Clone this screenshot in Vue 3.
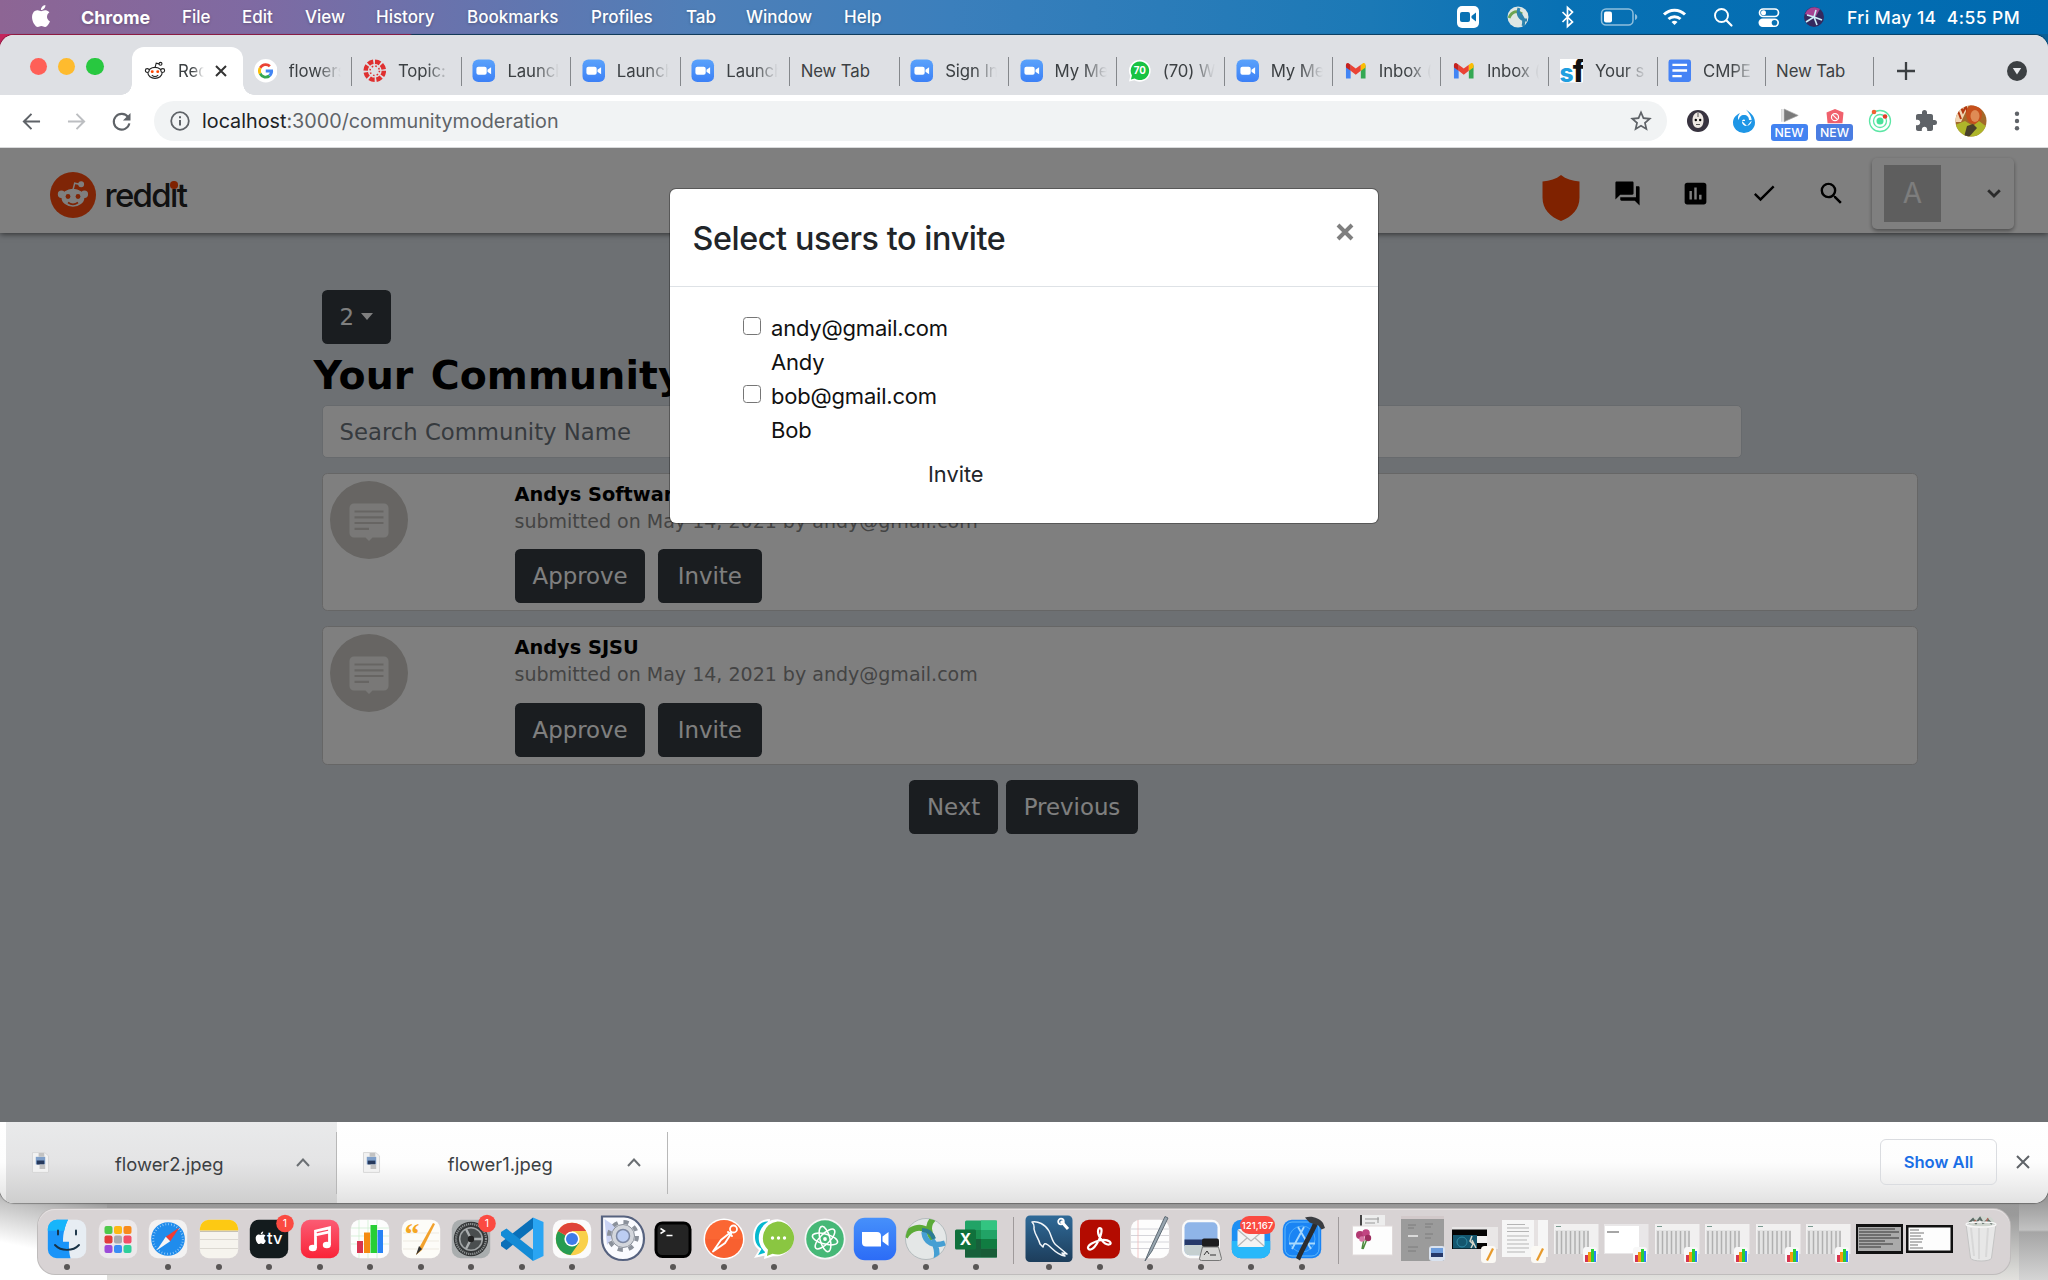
<script setup>
const menus = [
  ['Chrome', 101], ['File', 60], ['Edit', 63], ['View', 71], ['History', 91],
  ['Bookmarks', 124], ['Profiles', 95], ['Tab', 60], ['Window', 98], ['Help', 60],
]

const zoomFav = '<defs><linearGradient id="zf" x1="0" y1="0" x2="0" y2="1"><stop offset="0" stop-color="#5aa2fb"/><stop offset="1" stop-color="#3c80f6"/></linearGradient></defs><rect x=".5" y=".5" width="23" height="23" rx="6" fill="url(#zf)"/><rect x="4.500" y="8" width="10.500" height="8" rx="2" fill="#fff"/><path d="M15.800 11 19.500 8.300v7.400L15.800 13z" fill="#fff"/>'
const gmailFav = '<path d="M2 6v14h4.800V12z" fill="#4285f4"/><path d="M17.200 12v8H22V6z" fill="#34a853"/><path d="M6.800 5.800 12 9.800l5.200-4v6.200L12 16l-5.200-4z" fill="#ea4335"/><path d="M17.200 5.800 19 4.500c1.400-1 3-.1 3 1.500v2.600L17.200 12z" fill="#fbbc04"/><path d="M6.800 5.800 5 4.500C3.600 3.500 2 4.400 2 6v2.600L6.800 12z" fill="#c5221f"/>'

const tabs = [
  { icon: '<circle cx="12" cy="12" r="12" fill="#fff"/><path d="M12 4.300a7.700 7.700 0 0 1 5.200 2l-2 2.100A4.800 4.800 0 0 0 7.500 10L5.200 8.200A7.700 7.700 0 0 1 12 4.300z" fill="#ea4335"/><path d="M5.200 8.200 7.500 10a5 5 0 0 0 0 4.100l-2.400 1.800a7.700 7.700 0 0 1 .1-7.700z" fill="#fbbc05"/><path d="M5.100 15.900 7.500 14.100a4.800 4.800 0 0 0 7.100 2.100l2.400 1.900a7.700 7.700 0 0 1-11.900-2.200z" fill="#34a853"/><path d="M12 10.700h7.400c.5 3-.5 5.700-2.400 7.400l-2.400-1.900a3.400 3.400 0 0 0 1.500-2.400H12z" fill="#4285f4"/>', text: 'flowers' },
  { icon: '<g fill="none" stroke="#df3030"><circle cx="12" cy="12" r="9.300" stroke-width="4.600" stroke-dasharray="5.500 1.800"/><circle cx="12" cy="12" r="4.800" stroke-width="1.600" stroke-dasharray="1.600 2.170"/></g>', text: 'Topic: A' },
  { icon: zoomFav, text: 'Launch' },
  { icon: zoomFav, text: 'Launch' },
  { icon: zoomFav, text: 'Launch' },
  { text: 'New Tab' },
  { icon: zoomFav, text: 'Sign In' },
  { icon: zoomFav, text: 'My Mee' },
  { icon: '<path d="M12 .8a11.200 11.200 0 1 1-5.500 21L1 23l1.300-5.600A11.200 11.200 0 0 1 12 .8z" fill="#fff"/><path d="M12 2.500a9.500 9.500 0 1 1-5.200 17.400L3 21l1-4.200A9.500 9.500 0 0 1 12 2.500z" fill="#18c343"/><text x="12" y="15.800" text-anchor="middle" font-family="Inter,sans-serif" font-weight="700" font-size="10" fill="#fff">70</text>', text: '(70) Wh' },
  { icon: zoomFav, text: 'My Mee' },
  { icon: gmailFav, text: 'Inbox (' },
  { icon: gmailFav, text: 'Inbox (' },
  { icon: '<rect width="24" height="24" fill="#fff"/><text x="-.5" y="23.500" font-family="Inter,sans-serif" font-weight="800" font-size="25" fill="#1f9fe0">s</text><text x="13" y="23.500" font-family="Inter,sans-serif" font-weight="800" font-size="31" fill="#111">f</text>', text: 'Your s' },
  { icon: '<rect x=".5" y=".5" width="23" height="23" rx="2.500" fill="#4683f5"/><path d="M4.500 6h15M4.500 11.700h15M4.500 17.500h9.500" stroke="#fff" stroke-width="2.500"/>', text: 'CMPE' },
  { text: 'New Tab' },
]

const snoo = '<ellipse cx="12" cy="14" rx="7.800" ry="6"/><circle cx="3.600" cy="11.500" r="2.100"/><circle cx="20.400" cy="11.500" r="2.100"/><circle cx="18" cy="4.200" r="1.600"/><path d="M12 8.500 13.300 3.400 16.500 4.200" fill="none"/>'

const rows = [
  { title: 'Andys Software', by: 'submitted on May 14, 2021 by andy@gmail.com' },
  { title: 'Andys SJSU', by: 'submitted on May 14, 2021 by andy@gmail.com' },
]
const users = [
  { mail: 'andy@gmail.com', name: 'Andy' },
  { mail: 'bob@gmail.com', name: 'Bob' },
]

const tile = (fill, extra = '') => `<rect x="4.800" y="4.800" width="38.400" height="38.400" rx="9" fill="${fill}" ${extra}/>`
const badge = '<circle cx="40" cy="8.500" r="8.800" fill="#fb4a41"/><text x="40" y="12.300" text-anchor="middle" font-family="Inter,sans-serif" font-size="10.500" fill="#fff">1</text>'
const pen = '<path d="M36 8 22 33l-3 7 6-5L38 9z" fill="#f2a12c"/><path d="M22 31 19 40l6-6z" fill="#333"/>'

const dockApps = [
  { on: 1, svg: `${tile('#e7edf3')}<path d="M13.800 4.800H25c-3 6-5 13-5 22h6c-.3 6 0 11 1.500 16.400H13.800a9 9 0 0 1-9-9V13.800a9 9 0 0 1 9-9z" fill="#1a94f8"/><path d="M13.800 4.800H25c-2 4-3 7-3.700 11H4.800v-2a9 9 0 0 1 9-9z" fill="#17b5fb"/><path d="M15 15.500v4M33 15.500v4M12 30c6 6.500 18 6.500 24 0" fill="none" stroke="#173044" stroke-width="1.900" stroke-linecap="round"/>` },
  { svg: `${tile('#ece9eb')}<g><rect x="10.500" y="11" width="8" height="8" rx="2" fill="#4fc84b"/><rect x="20" y="11" width="8" height="8" rx="2" fill="#fdb813"/><rect x="29.500" y="11" width="8" height="8" rx="2" fill="#f78a1c"/><rect x="10.500" y="20.500" width="8" height="8" rx="2" fill="#e23b3b"/><rect x="20" y="20.500" width="8" height="8" rx="2" fill="#a9a9ae"/><rect x="29.500" y="20.500" width="8" height="8" rx="2" fill="#f14e68"/><rect x="10.500" y="30" width="8" height="8" rx="2" fill="#9c4bd8"/><rect x="20" y="30" width="8" height="8" rx="2" fill="#3a8df5"/><rect x="29.500" y="30" width="8" height="8" rx="2" fill="#2fcf9b"/></g>` },
  { on: 1, svg: `${tile('#f3f2f2')}<circle cx="24" cy="24" r="16.800" fill="#1f8cec"/><circle cx="24" cy="24" r="14.800" fill="none" stroke="#aad6fa" stroke-width="2" stroke-dasharray=".7 2.200"/><path d="M35.500 12.500 21.800 21.800 26.200 26.200z" fill="#f23b33"/><path d="M12.500 35.500 21.800 21.800 26.200 26.200z" fill="#f5f5f5"/>` },
  { on: 1, svg: `${tile('#f6f4ee')}<path d="M4.800 15.500v-1.700a9 9 0 0 1 9-9h20.400a9 9 0 0 1 9 9v1.700z" fill="#fdc913"/><path d="M5 16.300h38" stroke="#b9b4a6" stroke-width="1"/><path d="M5 24.500h38M5 33.500h38" stroke="#d5d2ca" stroke-width=".8"/>` },
  { on: 1, svg: `${tile('#131b1d')}<g transform="translate(9.500 16.500) scale(.52)"><path fill="#fff" d="M12.152 6.896c-.948 0-2.415-1.078-3.960-1.040-2.040.027-3.910 1.183-4.961 3.014-2.117 3.675-.546 9.103 1.519 12.090 1.013 1.454 2.208 3.090 3.792 3.039 1.520-.065 2.090-.987 3.935-.987 1.831 0 2.350.987 3.960.948 1.637-.026 2.676-1.480 3.676-2.948 1.156-1.688 1.636-3.325 1.662-3.415-.039-.013-3.182-1.221-3.220-4.857-.026-3.040 2.480-4.494 2.597-4.559-1.429-2.090-3.623-2.324-4.390-2.376-2-.156-3.675 1.090-4.610 1.090zM15.530 3.830c.843-1.012 1.400-2.427 1.245-3.830-1.207.052-2.662.805-3.532 1.818-.780.896-1.454 2.338-1.273 3.714 1.338.104 2.715-.688 3.559-1.701"/></g><text x="22" y="29" font-family="Inter,sans-serif" font-size="16.500" font-weight="500" fill="#fff">tv</text>${badge}` },
  { on: 1, svg: `<defs><linearGradient id="mu" x1="0" y1="0" x2="0" y2="1"><stop offset="0" stop-color="#fb5c74"/><stop offset="1" stop-color="#fa2338"/></linearGradient></defs>${tile('url(#mu)')}<path d="M19.500 33V16l14-3.200V30M19.500 20l14-3.200" fill="none" stroke="#fff" stroke-width="2.800"/><ellipse cx="16.800" cy="33" rx="4" ry="3.200" fill="#fff"/><ellipse cx="30.800" cy="30" rx="4" ry="3.200" fill="#fff"/>` },
  { on: 1, svg: `${tile('#fdfdfd')}<path d="M5 13h38M5 21h38M5 29h38M13 5v38M22 5v38M31 5v38" stroke="#c9eccb" stroke-width=".7"/><path d="M11 26h6v12h-6z" fill="#d8344f"/><path d="M18 17.500h6V38h-6z" fill="#f58a12"/><path d="M24.500 10h6.500v28h-6.500z" fill="#28cf35"/><path d="M31.500 15H37v23h-5.500z" fill="#2782f5"/>` },
  { on: 1, svg: `${tile('#fdfcf8')}<path d="M6 18h36M6 26h36M6 34h36" stroke="#e6e3d8" stroke-width=".7"/><text x="7.500" y="29" font-family="Liberation Serif,serif" font-size="30" font-weight="700" fill="#f5a623">“</text>${pen}` },
  { on: 1, svg: `${tile('#a9adae')}<circle cx="24" cy="24" r="17.200" fill="#333637"/><circle cx="24" cy="24" r="15" fill="none" stroke="#8e9293" stroke-width="2.200" stroke-dasharray="1.200 .9"/><circle cx="24" cy="24" r="11.300" fill="#4a4e4f" stroke="#9fa3a4" stroke-width="1.600"/><path d="M24 24 19 14M24 24h11.300M24 24 19 34" stroke="#aaaeaf" stroke-width="2.400"/><circle cx="24" cy="24" r="3.200" fill="#222"/>${badge}` },
  { on: 1, svg: '<path d="M35 2.500 45.500 7v34L35 46z" fill="#2aa5f3"/><path d="M35 2.500v11L8.500 35 3 31v-3.500z" fill="#0a6fb8"/><path d="M35 46V34.500L8.500 13.500 3 17v3.500z" fill="#148bd6"/>' },
  { on: 1, svg: `${tile('#fbfbfb')}<circle cx="24" cy="24" r="16.200" fill="#f9d04a"/><path d="M24 24 10 15.900A16.200 16.200 0 0 0 22.500 40.100L31 28 24 24z" fill="#279c52"/><path d="M24 24 9.900 16a16.200 16.200 0 0 1 28.200 0H24z" fill="#df4439"/><circle cx="24" cy="24" r="7.600" fill="#fff"/><circle cx="24" cy="24" r="6" fill="#3f7ce9"/>` },
  { svg: '<path d="M3 1.500h22A20.500 22 0 0 1 45 23.500C45 36 36 45 24 45S3 36 3 23.500z" fill="#fafbff" stroke="#56627f" stroke-width="2.200"/><path d="M5.500 4 20 14 8 30z" fill="#c9d2f3"/><circle cx="24" cy="21" r="14" fill="none" stroke="#8b919b" stroke-width="4" stroke-dasharray="5.200 5.800"/><circle cx="24" cy="21" r="11.500" fill="#d3d6dc" stroke="#8b919b"/><circle cx="24" cy="21" r="6.500" fill="#bccdf2" stroke="#7c88a3" stroke-width="1.500"/>' },
  { on: 1, svg: '<rect x="5.500" y="6.500" width="37" height="36.500" rx="8" fill="#000"/><rect x="8.500" y="9.500" width="31" height="30.500" rx="4.500" fill="#242424"/><path d="M11.500 13.500 15.500 16l-4 2.500M17.500 20.500h6" fill="none" stroke="#fff" stroke-width="1.500"/>' },
  { on: 1, svg: '<circle cx="24" cy="24" r="20.500" fill="#fff"/><circle cx="24" cy="24" r="19" fill="#fb6633"/><path d="M24 43A19 19 0 0 1 5 24h38a19 19 0 0 1-19 19z" fill="#f4552b" opacity=".35"/><circle cx="33.500" cy="14" r="3.500" fill="none" stroke="#fff" stroke-width="1.800"/><path d="M31 17 21 25l-8 11.500M31.500 18 25 28l-12 8.500M28 17l4 4" fill="none" stroke="#fff" stroke-width="1.900" stroke-linecap="round"/>' },
  { on: 1, svg: '<path d="M20 4C9 4 3 12 3 22c0 6 2 10 6 13L4 43l14-3z" fill="#fff"/><path d="M18 6.500C10 6.500 5 13 5 22c0 5 2 9 6.500 12L8 40l9-3z" fill="#06b9cf"/><path d="M27.500 4.200A18.500 18.500 0 1 1 23 41.200L14 44l1-7A18.800 18.800 0 0 1 27.500 4.200z" fill="#fff"/><path d="M27.500 6.500a16.500 16.500 0 1 1-5 32.200L17 41l1-6.300A16.500 16.500 0 0 1 27.500 6.500z" fill="#8ac641"/><g fill="#fff"><circle cx="22.500" cy="23" r="1.700"/><circle cx="28.500" cy="23" r="1.700"/><circle cx="34.500" cy="23" r="1.700"/></g>' },
  { svg: '<circle cx="24" cy="24" r="20.500" fill="#f6f6f6"/><circle cx="24" cy="24" r="18.800" fill="#46b877"/><g fill="none" stroke="#fff" stroke-width="1.500"><ellipse cx="24" cy="24" rx="13" ry="5" transform="rotate(15 24 24)"/><ellipse cx="24" cy="24" rx="13" ry="5" transform="rotate(75 24 24)"/><ellipse cx="24" cy="24" rx="13" ry="5" transform="rotate(135 24 24)"/></g><circle cx="24" cy="24" r="1.900" fill="#fff"/>' },
  { on: 1, svg: '<defs><linearGradient id="zz" x1="0" y1="0" x2="0" y2="1"><stop offset="0" stop-color="#4690fb"/><stop offset="1" stop-color="#2c6cf6"/></linearGradient></defs><rect x="2.800" y="2.800" width="42.400" height="42.400" rx="11" fill="url(#zz)"/><path d="M11 17h15a4 4 0 0 1 4 4v10.500H15a4 4 0 0 1-4-4z" fill="#fff"/><path d="M31.500 21.500 37.500 17v14l-6-4.500z" fill="#fff"/>' },
  { on: 1, svg: '<defs><clipPath id="cs"><circle cx="24" cy="24" r="20.500"/></clipPath></defs><circle cx="24" cy="24" r="20.500" fill="#e4e7e7" stroke="#a8b3b5" stroke-width=".8"/><g clip-path="url(#cs)"><path d="M3 22c5-9 15-12 23-6M33 2c-7 6-8 14-2 22" fill="none" stroke="#5bab38" stroke-width="6"/><path d="M22 17c1 11 10 15 21 11M34 45c2-8 0-15-4-20" fill="none" stroke="#459fd3" stroke-width="5.500"/><path d="M20 15c6 0 10 3 12 9" fill="none" stroke="#2c7c95" stroke-width="4"/></g>' },
  { on: 1, svg: '<rect x="13" y="5.500" width="32" height="37" rx="1.500" fill="#21a366"/><path d="M29 5.500h16v9.500H29z" fill="#33c481"/><path d="M13 15h16v9H13z" fill="#1a8f51"/><path d="M29 24h16v9.500H29z" fill="#107c41"/><path d="M13 24h16v18.500H13z" fill="#17603a"/><path d="M29 33.500h16v9H29z" fill="#185c37"/><rect x="3" y="14.500" width="21" height="20" rx="1.500" fill="#10713c"/><text x="13.500" y="30.300" text-anchor="middle" font-family="Inter,sans-serif" font-weight="700" font-size="15.500" fill="#fff">X</text>' },
]

const dockRecent = [
  { on: 1, svg: '<defs><linearGradient id="my" x1="0" y1="0" x2="0" y2="1"><stop offset="0" stop-color="#2f6a98"/><stop offset="1" stop-color="#1d3d5b"/></linearGradient></defs><rect x=".5" y=".5" width="47" height="46.500" rx="4.500" fill="url(#my)"/><path d="M7 7c6-1 13 2 17 9 3 6 3 11 7 14l11 9-5-1 3 3c-8-1-12-7-17-11-3-2-4-2-5 2l-3-3c-1-5-5-9-6-15 0-3 1-4-2-7z" fill="none" stroke="#f2f6fa" stroke-width="1.500" stroke-linejoin="round"/><path d="M36 6 43 14" stroke="#fff" stroke-width="3"/><circle cx="36" cy="6.500" r="2.800" fill="none" stroke="#fff" stroke-width="1.800"/>' },
  { on: 1, svg: '<rect x="4" y="4.800" width="40" height="38.800" rx="9" fill="#b30b00"/><path d="M12.500 34c-3-3 6-8 13-9 8-1 11.500 4 7.500 4.500-5 .5-11-8-11-13 0-5 4-4 3.500 0-.5 6-8 21-13 17.500z" fill="none" stroke="#fff" stroke-width="2.200"/>' },
  { on: 1, svg: `${tile('#fdfdfd')}<path d="M5 14h38M5 20.500h38M5 27h38M5 33.500h38" stroke="#d5d5da" stroke-width="1"/><path d="M12 5v38" stroke="#f0b9b9" stroke-width=".8"/><path d="M39 1.500 24 34l-5 12 7-10L42 3z" fill="#98a6b0" stroke="#5f6b75" stroke-width="1"/>` },
  { on: 1, svg: '<rect x="5" y="4.800" width="38" height="38.400" rx="8" fill="#fafafa"/><rect x="7.500" y="7.300" width="33" height="33" rx="5" fill="#8fb5e8"/><path d="M7.500 24.500h33V31h-33z" fill="#26396a"/><path d="M7.500 30h33v5.300a5 5 0 0 1-5 5h-23a5 5 0 0 1-5-5z" fill="#c5cfd0"/><rect x="25" y="23.500" width="17" height="8.500" rx="2" fill="#1c1c1e"/><path d="M25.500 32h16l3 11.500a2 2 0 0 1-2 2H24.500a2 2 0 0 1-2-2z" fill="#d6d6d4" stroke="#777"/><path d="m27 40 3-4 2 3M33 40h6" stroke="#333" fill="none"/>' },
  { on: 1, svg: `${tile('#1d8ff3')}<path d="M4.800 26h38.400v8.200a9 9 0 0 1-9 9H13.800a9 9 0 0 1-9-9z" fill="#28b8fa"/><rect x="10.500" y="14" width="27" height="18" rx="2" fill="#f3f3f3"/><path d="m11 15 13 11 13-11M11 31l9-8M37 31l-9-8" fill="none" stroke="#b7b7b7" stroke-width="1.200"/><rect x="13" y="1" width="35" height="18" rx="9" fill="#fb4a41"/><text x="30.500" y="13.500" text-anchor="middle" font-family="Inter,sans-serif" font-size="9.600" font-weight="500" fill="#fff">121,167</text>` },
  { on: 1, svg: `${tile('#1a84f4')}<rect x="7" y="7" width="34" height="34" rx="7" fill="none" stroke="#62bafb" stroke-width="1"/><circle cx="24" cy="24" r="13" fill="none" stroke="#57b2fa" stroke-width=".8"/><path d="M26 12 14 34M20 12l13 22M11 28.500h26" stroke="#a8d8fd" stroke-width="1.800" fill="none"/><path d="M35 8c-3 8-14 27-17 35l4 2.500C26 36 36 18 40 9z" fill="#2b2d30"/><path d="M27 2.500c7-2 14 .5 18 5.500l2 5-3.500 1.500-3-4-9-3z" fill="#3a3c40"/>` },
]

const miniBars = '<rect x="30" y="32" width="14" height="16" rx="3" fill="#f8f8f8"/><path d="M32 40h3v7h-3z" fill="#d8344f"/><path d="M35 37h3v10h-3z" fill="#f59a12"/><path d="M38 34h3v13h-3z" fill="#28cf35"/><path d="M41 36h2v11h-2z" fill="#2782f5"/>'
const miniPen = '<rect x="29" y="31" width="15" height="17" rx="3.500" fill="#fbf9f4"/><path d="m40 33-6 12 2 1 6-12z" fill="#e79a2c"/>'
const sheet = `<rect x="1" y="9" width="44.500" height="30" fill="#f1f0f0"/><path d="M2 15h34v24H2z" fill="#e4e4e4"/><path d="M4 16v23M8.500 16v23M13 16v23M17.500 16v23M22 16v23M26.500 16v23M31 16v23M35 16v18" stroke="#b0b0b0" stroke-width="1.500"/><path d="M3 11.500h5" stroke="#7a9a90"/>${miniBars}`
const minis = [
  '<path d="M9 0h25v11H9z" fill="#ededed"/><path d="M9 0h2v11H9z" fill="#444"/><path d="M14 4h14M14 8h10M27 2v6" stroke="#999"/><rect x="1.500" y="11" width="40" height="29" fill="#fdfdfd" stroke="#e0dada"/><path d="M13 24 11 34M16 24l-4 10" stroke="#4c8a3c" stroke-width="1.500"/><circle cx="9" cy="20" r="4" fill="#b23a72"/><circle cx="15" cy="18" r="3.800" fill="#c14582"/><circle cx="17" cy="23" r="3.200" fill="#9d2c5f"/><circle cx="11" cy="24" r="2.800" fill="#d774a5"/>',
  '<rect x="0" y="1" width="43" height="45" fill="#9b9b9b"/><path d="M0 1h43v3H0z" fill="#d2c9ca"/><path d="M7 10h8M7 13h6M24 9h8M24 12h6M7 32h10M7 36h8M24 19h8M24 23h6" fill="none" stroke="#7c7c7c"/><path d="M7 21h10" stroke="#eee" stroke-width="1.500"/><rect x="28" y="31" width="16" height="15" rx="3" fill="#d9e2ef"/><path d="M30 33h12v5H30z" fill="#6d9ddd"/><path d="M30 38h12v4H30z" fill="#26396a"/>',
  '<rect x="0" y="12" width="46" height="22" fill="#e9e7e7"/><rect x="0" y="14.500" width="35" height="19.500" fill="#050505"/><rect x="1" y="20" width="24" height="13.500" fill="#14566e"/><circle cx="10" cy="27" r="5" fill="none" stroke="#2f8ba6"/><path d="M25 21h10v7H25z" fill="#f2f2f2"/><path d="m20 21-2 5 3 3-2 4M20 25l4 8" stroke="#d5d5c8" stroke-width="1.500" fill="none"/>' + miniPen,
  '<rect x="0" y="5" width="46" height="37" fill="#f6f6f6"/><path d="M5 9.500h18M5 13h22M5 16.500h22M5 21h22M5 25h20M5 29h22M5 33h22M5 37h18" stroke="#b5b5b5" stroke-width="1"/><path d="M34 5v37" stroke="#e6e2e2" stroke-width="4"/>' + miniPen,
  sheet,
  `<rect x="1" y="9" width="44.500" height="30" fill="#e9e7e8"/><path d="M2 11h34v27H2z" fill="#fff"/><path d="M4 17h12" stroke="#888" stroke-width="1.500"/>${miniBars}`,
  sheet, sheet, sheet, sheet,
  '<rect x="0" y="9" width="47" height="30" fill="#111"/><rect x="2" y="12" width="43" height="24" fill="#aaa"/><path d="M3 14h36M3 17h40M3 20h32M3 23h40M3 26h26M3 29h34M3 32h22" stroke="#333" stroke-width="1.200"/>',
  '<rect x="0" y="10" width="47" height="28" fill="#111"/><rect x="2.500" y="12.500" width="42" height="23" fill="#fdfdfd"/><path d="M4 15h9M4 18h14M4 21h11M4 24h13M4 27h12M4 30h8M4 33h13" stroke="#777" stroke-width="1.200"/>',
  '<path d="M9 9h30l-4.500 34c-.5 4-20 4-21 0z" fill="#e9e9e9" fill-opacity=".9" stroke="#c4c4c4"/><path d="M14 13l3 28M22 13v31M31 13l-2 29" stroke="#d8d8d8" stroke-width="2"/><path d="M10 8c4-7 9-4 12-6s6 1 9 0 6 3 7 7c-7 4-21 4-28-1z" fill="#cfd5cf"/><path d="m12 8 4-4 3 4 4-5 3 5 5-3 4 4" stroke="#5c6a65" stroke-width="2" fill="none"/><path d="m17 8 2-3M29 7l2-4" stroke="#b0695c" stroke-width="1.500"/><ellipse cx="24" cy="9.500" rx="15" ry="2.500" fill="none" stroke="#f7f7f7" stroke-width="1.300"/>',
]
</script>

<template>
  <div class="desktop">
    <div class="wallpaper"><i class="w1"></i><i class="w2"></i><i class="w3"></i></div>

    <header class="menubar">
      <svg class="apple" viewBox="0 0 24 24"><path fill="#fff" d="M12.152 6.896c-.948 0-2.415-1.078-3.960-1.040-2.040.027-3.910 1.183-4.961 3.014-2.117 3.675-.546 9.103 1.519 12.090 1.013 1.454 2.208 3.090 3.792 3.039 1.520-.065 2.090-.987 3.935-.987 1.831 0 2.350.987 3.960.948 1.637-.026 2.676-1.480 3.676-2.948 1.156-1.688 1.636-3.325 1.662-3.415-.039-.013-3.182-1.221-3.220-4.857-.026-3.040 2.480-4.494 2.597-4.559-1.429-2.090-3.623-2.324-4.390-2.376-2-.156-3.675 1.090-4.610 1.090zM15.530 3.830c.843-1.012 1.400-2.427 1.245-3.830-1.207.052-2.662.805-3.532 1.818-.780.896-1.454 2.338-1.273 3.714 1.338.104 2.715-.688 3.559-1.701" /></svg>
      <nav>
        <span v-for="(m, i) in menus" :key="m[0]" :class="{ app: i === 0 }" :style="{ width: m[1] + 'px' }">{{ m[0] }}</span>
      </nav>
      <div class="status">
        <svg width="50" height="34" viewBox="-25 -17 50 34"><rect x="-11" y="-11" width="22" height="22" rx="5" fill="#fff" /><rect x="-8" y="-5" width="10" height="10" rx="2" fill="#0871b3" /><path d="M3.500-1 8-4.500v9L3.500 1z" fill="#0871b3" /></svg>
        <svg width="50" height="34" viewBox="-25 -17 50 34"><circle r="10.500" fill="#dfe7e4" /><path d="M-9 1c3-7 8-8 13-4" stroke="#6da552" stroke-width="3" fill="none" /><path d="M1-9C-1-3 1 3 9 3M5 9C7 3 4-2 1-4" stroke="#2e84ae" stroke-width="3" fill="none" /></svg>
        <svg width="49" height="34" viewBox="-24.500 -17 49 34"><path d="M-5-5 5 5 0 9.500v-19L5-5-5 5" fill="none" stroke="#fff" stroke-width="1.700" /></svg>
        <svg width="54" height="34" viewBox="-27 -17 54 34"><rect x="-17.500" y="-8" width="31.500" height="16" rx="4.500" fill="none" stroke="#fff" stroke-opacity=".55" stroke-width="1.500" /><path d="M16-3c3 1 3 5 0 6z" fill="#fff" fill-opacity=".55" /><rect x="-15" y="-5.500" width="8" height="11" rx="2" fill="#fff" /></svg>
        <svg width="57" height="34" viewBox="-28.500 -17 57 34"><g fill="none" stroke="#fff" stroke-width="3"><path d="M-10.500-2.500a15 15 0 0 1 21 0M-6 2a9 9 0 0 1 12 0" /></g><path d="M-3 5a4.500 4.500 0 0 1 6 0L0 8z" fill="#fff" /></svg>
        <svg width="40" height="34" viewBox="-20 -17 40 34"><circle cx="-1.500" cy="-1.500" r="6.500" fill="none" stroke="#fff" stroke-width="1.900" /><path d="m3.500 3.500 5 5" stroke="#fff" stroke-width="2.200" stroke-linecap="round" /></svg>
        <svg width="51" height="34" viewBox="-25.500 -17 51 34"><rect x="-9" y="-8" width="19" height="7.500" rx="3.700" fill="none" stroke="#fff" stroke-width="1.700" /><circle cx="-5" cy="-4.200" r="2.500" fill="#fff" /><rect x="-10" y="1.500" width="20.500" height="8.500" rx="4.200" fill="#fff" /><circle cx="6" cy="5.700" r="2.800" fill="#0871b3" /></svg>
        <svg width="53" height="34" viewBox="-20 -17 53 34"><circle r="10" fill="#35295e" /><path d="M-9-3A10 10 0 0 1 6-8L1 1z" fill="#c04aa0" opacity=".8" /><path d="M-8 5 0 0l2-7M0 0l8 3M0 0l3 8M-7-2l7 2" stroke="#cdeef7" stroke-width="1.600" fill="none" /></svg>
        <span class="clock">Fri May 14&nbsp; 4:55 PM</span>
      </div>
    </header>

    <section class="window">
      <div class="tabstrip">
        <div class="lights"><i class="r"></i><i class="y"></i><i class="g"></i></div>
        <div class="tab active">
          <svg class="fav" viewBox="0 0 24 24"><g fill="#fff" stroke="#222" stroke-width="1.200" v-html="snoo"></g><circle cx="9" cy="12.700" r="1.600" fill="#ff4500" /><circle cx="15" cy="12.700" r="1.600" fill="#ff4500" /><path d="M8.500 16.500c2 1.800 5 1.800 7 0" fill="none" stroke="#222" stroke-width="1.100" /></svg>
          <span class="label">Reddit</span>
          <svg class="x" viewBox="0 0 12 12"><path d="m1 1 10 10M11 1 1 11" stroke="#333" stroke-width="2" /></svg>
        </div>
        <div v-for="(t, i) in tabs" :key="i" class="tab" :class="i < 7 ? 'wide' : 'slim'">
          <svg v-if="t.icon" class="fav" viewBox="0 0 24 24" v-html="t.icon"></svg>
          <span class="label" :class="{ plain: !t.icon }">{{ t.text }}</span>
        </div>
        <svg class="plus" viewBox="0 0 18 18"><path d="M9 0v18M0 9h18" stroke="#3c4043" stroke-width="2.300" /></svg>
        <svg class="down" viewBox="0 0 20 20"><circle cx="10" cy="10" r="10" fill="#3c4043" /><path d="M5.800 7h8.400L10 13.500z" fill="#e8eaed" /></svg>
      </div>

      <div class="toolbar">
        <svg class="nav" viewBox="0 0 20 20"><path d="M19 10H2M10 2l-8 8 8 8" fill="none" stroke="#5f6368" stroke-width="2.100" /></svg>
        <svg class="nav" viewBox="0 0 20 20"><path d="M1 10h17M10 2l8 8-8 8" fill="none" stroke="#bcbec1" stroke-width="2.100" /></svg>
        <svg class="nav" viewBox="0 0 20 20"><path d="M17 5.500a8.300 8.300 0 1 0 1.300 6.500" fill="none" stroke="#5f6368" stroke-width="2.200" /><path d="M19.500 1v8h-8z" fill="#5f6368" /></svg>
        <div class="url">
          <svg viewBox="0 0 20 20" width="20" height="20"><circle cx="10" cy="10" r="8.800" fill="none" stroke="#5f6368" stroke-width="1.800" /><path d="M10 9v5.500M10 5.200v2" stroke="#5f6368" stroke-width="2" /></svg>
          <span><b>localhost</b>:3000/communitymoderation</span>
          <svg class="star" viewBox="0 0 24 24" width="26" height="26"><path fill="#5f6368" d="M22 9.240l-7.190-.620L12 2 9.190 8.630 2 9.240l5.460 4.730L5.820 21 12 17.270 18.180 21l-1.630-7.030L22 9.240zM12 15.400l-3.760 2.270 1-4.280-3.320-2.880 4.380-.380L12 6.100l1.710 4.040 4.380.380-3.320 2.880 1 4.280L12 15.400z" /></svg>
        </div>
        <div class="exts">
          <svg viewBox="0 0 24 24"><circle cx="12" cy="12" r="11" fill="#38333f" /><path d="M6.500 11c0-10 11-10 11 0 0 5-2 8-5.500 8s-5.500-3-5.500-8z" fill="#eee8e3" /><circle cx="9.800" cy="11" r="1.200" /><circle cx="14.200" cy="11" r="1.200" /><path d="M10 15.500h4M12 4v4" stroke="#555" /></svg>
          <svg viewBox="0 0 24 24"><path d="M14 .5C17 3 23 6 23 13.500a11 10.500 0 0 1-22 0C1 9 4 6 8 4 5 8 6 10 7 11c0-3 2-5 5-5 3 0 5 2 5 5h3l-5 6-5-5h3c0-2-3-2-3 1 0 4 6 6 9 1 2-4-1-9-5-13.500z" fill="#1e96e6" /></svg>
          <span class="ext"><svg viewBox="0 0 24 24"><path d="M2 0v18M5 0l20 9L5 18z" fill="#7a7a7a" stroke="#a5a5a5" /></svg><em>NEW</em></span>
          <span class="ext"><svg viewBox="0 0 24 24"><path d="M12 0 24 5l-1.500 15h-21L0 5z" fill="#f0616d" /><circle cx="12" cy="11.500" r="5" fill="none" stroke="#fff" stroke-width="1.700" /><path d="m8.500 8 7 7" stroke="#fff" stroke-width="1.500" /></svg><em class="alt">NEW</em></span>
          <svg viewBox="0 0 24 24"><g fill="none" stroke="#5ce6a5" stroke-width="1.300"><circle cx="12" cy="12" r="10.500" /><circle cx="12" cy="12" r="6.500" /></g><circle cx="12" cy="12" r="3.500" fill="#48e29a" /><circle cx="6" cy="3" r="2.300" fill="#ef6332" /><circle cx="17" cy="7.500" r="2.300" fill="#e23c2b" /></svg>
          <svg viewBox="0 0 24 24"><path fill="#5f6368" d="M20.500 11H19V7c0-1.100-.900-2-2-2h-4V3.500a2.500 2.500 0 0 0-5 0V5H4c-1.100 0-1.990.900-1.990 2v3.800H3.500c1.490 0 2.700 1.210 2.700 2.700s-1.210 2.700-2.700 2.700H2V20c0 1.100.900 2 2 2h3.800v-1.500c0-1.490 1.210-2.700 2.700-2.700s2.700 1.210 2.700 2.700V22H17c1.100 0 2-.900 2-2v-4h1.500a2.500 2.500 0 0 0 0-5z" /></svg>
          <svg class="me" viewBox="0 0 32 32"><defs><clipPath id="av"><circle cx="16" cy="16" r="15.500" /></clipPath></defs><g clip-path="url(#av)"><path d="M0 0h32v32H0z" fill="#a3692a" /><path d="M0 0h14L6 17H0z" fill="#f0d3b0" /><path d="m5 0 3 7 3-6 2 10M3 6l3 8" stroke="#b3370f" stroke-width="2" fill="none" /><ellipse cx="19" cy="9" rx="8" ry="10" fill="#c6501b" /><ellipse cx="20" cy="11" rx="4.500" ry="6" fill="#df8b55" /><path d="m0 20 10-4 8 5 6-5 8 6v10H0z" fill="#aeb52a" /><path d="m12 21 6-2 4 4-8 9H9z" fill="#49402b" /></g></svg>
          <svg viewBox="0 0 24 24"><g fill="#5f6368"><circle cx="12" cy="4.800" r="2.200" /><circle cx="12" cy="12" r="2.200" /><circle cx="12" cy="19.200" r="2.200" /></g></svg>
        </div>
      </div>

      <main class="page">
        <div class="topbar">
          <svg class="logo" viewBox="0 0 46 46"><circle cx="23" cy="23" r="23" fill="#ff4a0c" /><g transform="translate(6.500 6.500) scale(1.370)" fill="#fff" stroke="#fff" stroke-width="1.100" v-html="snoo"></g><circle cx="18" cy="24.500" r="2.400" fill="#ff4a0c" /><circle cx="28" cy="24.500" r="2.400" fill="#ff4a0c" /><path d="M18 30.500c3 2.300 7 2.300 10 0" fill="none" stroke="#ff4a0c" stroke-width="1.600" /></svg>
          <span class="brand">redd<span class="dot">i</span>t</span>
          <div class="tools">
            <svg class="t1" viewBox="0 0 38 46"><path d="M19 0c5 4 11 6 18.500 6.500v16C37.500 34 30 42 19 46 8 42 .5 34 .5 22.500v-16C8 6 14 4 19 0z" fill="#ff4500" /></svg>
            <svg class="t2" viewBox="0 0 24 24"><path d="M21 6h-2v9H6v2c0 .550.450 1 1 1h11l4 4V7c0-.550-.450-1-1-1zm-4 6V3c0-.550-.450-1-1-1H3c-.550 0-1 .450-1 1v14l4-4h10c.550 0 1-.450 1-1z" /></svg>
            <svg class="t3" viewBox="0 0 24 24"><path d="M19 3H5c-1.100 0-2 .900-2 2v14c0 1.100.900 2 2 2h14c1.100 0 2-.900 2-2V5c0-1.100-.900-2-2-2zM9 17H7v-7h2v7zm4 0h-2V7h2v10zm4 0h-2v-4h2v4z" /></svg>
            <svg class="t4" viewBox="0 0 24 24"><path d="M9 16.170 4.830 12l-1.420 1.410L9 19 21 7l-1.410-1.410z" /></svg>
            <svg class="t5" viewBox="0 0 24 24"><path d="M15.500 14h-.790l-.280-.270A6.471 6.471 0 0 0 16 9.500 6.500 6.500 0 1 0 9.500 16c1.610 0 3.090-.590 4.230-1.570l.270.280v.790l5 4.990L20.490 19l-4.990-5zm-6 0C7.010 14 5 11.990 5 9.500S7.010 5 9.500 5 14 7.010 14 9.500 11.990 14 9.500 14z" /></svg>
            <div class="account"><span>A</span><svg viewBox="0 0 14 9" width="14" height="9"><path d="m1.200 1.200 5.800 5.800 5.800-5.800" fill="none" stroke="#555" stroke-width="2.800" /></svg></div>
          </div>
        </div>

        <div class="content">
          <button class="dark drop">2<i></i></button>
          <h1>Your Community</h1>
          <div class="search">Search Community Name</div>
          <article v-for="r in rows" :key="r.title" class="card">
            <svg viewBox="0 0 78 78" width="78" height="78"><circle cx="39" cy="39" r="39" fill="#cecbc6" /><path d="M24 22.500h30a4.500 4.500 0 0 1 4.500 4.500v25a4.500 4.500 0 0 1-4.500 4.500H42.500L39 60l-3.500-3.500H24a4.500 4.500 0 0 1-4.500-4.500V27a4.500 4.500 0 0 1 4.500-4.500z" fill="#f2f1ee" /><path d="M24.500 30.500h29M24.500 36.300h29M24.500 42h29M24.500 47.800h14.500" stroke="#cecbc6" stroke-width="2.200" /></svg>
            <div class="info">
              <strong>{{ r.title }}</strong>
              <small>{{ r.by }}</small>
              <div class="acts"><button class="dark">Approve</button><button class="dark">Invite</button></div>
            </div>
          </article>
          <div class="pager"><button class="dark">Next</button><button class="dark">Previous</button></div>
        </div>

        <div class="overlay">
          <div class="modal">
            <div class="mhead"><h2>Select users to invite</h2><svg viewBox="0 0 18 18" width="18" height="18"><path d="m2 2 14 14M16 2 2 16" stroke="#7f7f7f" stroke-width="4" /></svg></div>
            <ul>
              <li v-for="u in users" :key="u.mail"><i></i><p>{{ u.mail }}<br>{{ u.name }}</p></li>
            </ul>
            <div class="minvite">Invite</div>
          </div>
        </div>
      </main>

      <footer class="downloads">
        <div v-for="(f, i) in ['flower2.jpeg', 'flower1.jpeg']" :key="f" class="file" :class="{ hot: i === 0 }">
          <svg viewBox="0 0 18 22" width="17" height="21"><path d="M.5.500h13L17.500 4v17.500H.5z" fill="#f2f2f2" stroke="#d6d6d6" /><rect x="4" y="5" width="10" height="8" fill="#7f9fc9" /><path d="M5 9h8v4H5z" fill="#26395c" /><path d="M7 1h6v4H7zM8 13h6v5H8z" fill="#c2c2c2" /></svg>
          <span>{{ f }}</span>
          <svg class="up" viewBox="0 0 14 9" width="14" height="9"><path d="m1 8 6-6.500L13 8" fill="none" stroke="#6b6f73" stroke-width="2" /></svg>
        </div>
        <div class="all">Show All</div>
        <svg class="close" viewBox="0 0 14 14" width="14" height="14"><path d="m1 1 12 12M13 1 1 13" stroke="#5f6368" stroke-width="2" /></svg>
      </footer>
    </section>

    <div class="dock">
      <div v-for="(a, i) in dockApps" :key="i" class="slot"><svg viewBox="0 0 48 48" v-html="a.svg"></svg><i v-if="a.on"></i></div>
      <hr>
      <div v-for="(a, i) in dockRecent" :key="'r' + i" class="slot"><svg viewBox="0 0 48 48" v-html="a.svg"></svg><i v-if="a.on"></i></div>
      <hr>
      <div v-for="(m, i) in minis" :key="'m' + i" class="slot mini"><svg viewBox="0 0 48 48" v-html="m"></svg></div>
    </div>
  </div>
</template>

<style>
body { margin: 0; overflow: hidden; }
</style>

<style scoped>
* { box-sizing: border-box; }
svg { display: block; flex: none; overflow: visible; }
.desktop { position: relative; width: 2048px; height: 1280px; overflow: hidden; display: flex; flex-direction: column; font-family: Inter, "Liberation Sans", sans-serif; background: linear-gradient(90deg, #c4255c 0, #b52a62 410px, #1c4f78 412px, #0a5f97 100%) top / 100% 60px no-repeat #dddcd9; }
.wallpaper { position: absolute; left: 0; top: 1130px; width: 2048px; height: 150px; display: flex; background: #e0dfdc; }
.w1 { width: 107px; background: linear-gradient(12deg, #fff 22%, #c5c5c5 45%, #8d8d8d 62%); }
.w2 { width: 1912px; background: linear-gradient(#949494 0, #9a9a9a 85px, #d8d8d5 140px, #e2e1de 100%); }
.w3 { flex: 1; background: linear-gradient(#999 70px, #c2c2c2 100px, #a5a5a5 102px, #d5d5d5 100%); }

.menubar { position: relative; height: 34px; display: flex; align-items: center; color: #fff; background: linear-gradient(90deg, #8d6594 0, #7f6aa2 250px, #6574ae 480px, #4f7fb8 700px, #3b7fbc 950px, #1b79b6 1370px, #0871b4 1560px, #006ab0 100%); }
.menubar + .window { margin-top: 1px; }
.apple { width: 22px; height: 22px; margin: -3px 0 0 30px; }
nav { display: flex; align-items: center; margin-left: 29px; flex: 1; text-shadow: 0 1px 3px rgba(0, 0, 0, .25); }
nav span { display: block; white-space: nowrap; font-weight: 500; font-size: 17px; }
nav .app { font-weight: 700; font-size: 17.900px; }
.status { display: flex; align-items: center; margin-right: 26px; }
.clock { width: 175px; white-space: nowrap; font-weight: 500; font-size: 17.500px; letter-spacing: .45px; }

.window { position: relative; height: 1168px; display: flex; flex-direction: column; overflow: hidden; border-radius: 14px; background: #fff; box-shadow: 0 0 1px 1px rgba(0, 0, 0, .3); }
.tabstrip { height: 60px; flex: none; display: flex; align-items: center; background: #dee0e4; }
.lights { display: flex; gap: 10.800px; width: 132px; padding-left: 29.500px; margin-top: 3px; }
.lights i { width: 17.500px; height: 17.500px; border-radius: 50%; }
.r { background: #ff5f57; } .y { background: #febb2e; } .g { background: #28c840; }
.tab { position: relative; display: flex; align-items: center; height: 29px; margin-top: 12px; padding-left: 10.500px; border-right: 1.500px solid #84878b; font-size: 16.800px; color: #3c4043; flex: none; }
.wide { width: 109.450px; } .slim { width: 108.080px; }
.active { width: 111px; height: 48px; border: 0; background: #fff; border-radius: 12px 12px 0 0; padding-left: 12px; }
.active::before, .active::after { content: ""; position: absolute; bottom: 0; width: 11px; height: 11px; }
.active::before { left: -11px; background: radial-gradient(circle at 0 0, transparent 10.500px, #fff 11px); }
.active::after { right: -11px; background: radial-gradient(circle at 100% 0, transparent 10.500px, #fff 11px); }
.fav { width: 23.500px; height: 23.500px; overflow: hidden; }
.active .fav { width: 22px; height: 24px; }
.label { width: 52px; margin-left: 11.500px; overflow: hidden; white-space: nowrap; letter-spacing: -.1px; -webkit-mask-image: linear-gradient(90deg, #000 55%, transparent 100%); mask-image: linear-gradient(90deg, #000 55%, transparent 100%); }
.plain { width: 80px; margin-left: 0; -webkit-mask-image: none; mask-image: none; }
.active .label { width: 26px; margin-left: 12px; }
.x { width: 12px; height: 12px; margin-left: 11px; }
.plus { width: 18px; height: 18px; margin: 12px 0 0 23px; }
.down { width: 20px; height: 20px; margin: 12px 0 0 92px; }

.toolbar { height: 53px; flex: none; display: flex; align-items: center; border-bottom: 1px solid #d9dadb; padding-left: 22px; background: #fff; }
.nav { width: 19px; height: 19px; margin-right: 26px; }
.nav + .nav + .nav { margin-right: 23px; }
.url { display: flex; align-items: center; width: 1513px; height: 40px; border-radius: 20px; background: #f1f3f4; padding: 0 13px 0 15.500px; color: #5f6368; font-size: 19.750px; }
.url span { flex: 1; margin-left: 12.500px; }
.url b { font-weight: 400; color: #202124; }
.exts { display: flex; }
.exts > * { width: 24px; height: 24px; margin-left: 21.500px; position: relative; }
.exts > :first-child { margin-left: 19px; }
.exts .me { width: 32px; height: 32px; margin: -4px -4px -4px 17.500px; }
.ext svg { width: 20px; height: 17px; margin: 0 0 0 2px; }
.ext em { position: absolute; left: -6.500px; top: 15px; width: 37px; height: 17px; border-radius: 3px; background: #4383f1; color: #fff; font: 500 12.300px/18px Inter, sans-serif; text-align: center; }
.ext .alt { background: #4a7de2; }

.page { position: relative; height: 974px; flex: none; overflow: hidden; background: #dae0e6; font-family: "DejaVu Sans", Verdana, sans-serif; }
.topbar { position: relative; height: 85px; background: #fff; display: flex; align-items: center; padding: 7px 34px 0 50px; box-shadow: 0 1px 6px rgba(0, 0, 0, .6); }
.logo { width: 46px; height: 46px; margin-top: 2px; }
.brand { margin: 1px 0 0 8.500px; font: 500 33px/40px Inter, sans-serif; letter-spacing: -1.700px; color: #222; flex: 1; }
.dot { position: relative; }
.dot::before { content: ""; position: absolute; left: .3px; top: 6.500px; width: 7.500px; height: 7.500px; border-radius: 50%; background: #ff4500; }
.tools { display: flex; align-items: center; }
.t1 { width: 38px; height: 46px; margin-top: 8px; }
.t2 { width: 29px; height: 29px; margin-left: 32.500px; }
.t3 { width: 29px; height: 29px; margin-left: 39px; }
.t4 { width: 28px; height: 28px; margin-left: 40px; }
.t5 { width: 29px; height: 29px; margin-left: 39px; }
.t2, .t3, .t4, .t5 { margin-top: -2px; }
.account { display: flex; align-items: center; width: 142px; height: 71px; margin: -2px 0 0 26.500px; padding: 0 13px 0 12px; border-radius: 5px; background: #fff; box-shadow: 0 2px 4px rgba(0, 0, 0, .4); justify-content: space-between; }
.account span { width: 57px; height: 57px; background: #bdbdbd; color: #fafafa; font: 400 28px/56px Inter, sans-serif; text-align: center; }
.content { padding: 57px 130px 0 321.500px; }
.dark { display: block; height: 54px; padding: 0 18px; border: 0; border-radius: 5.500px; background: #343a40; color: #fff; font: 400 22.850px/55px "DejaVu Sans", sans-serif; white-space: nowrap; }
.drop { width: 69.500px; display: flex; align-items: center; }
.drop i { margin: -2px 0 0 7px; border: 6.500px solid transparent; border-top: 7px solid #fff; border-bottom: 0; }
h1 { margin: 0 0 0 -8px; padding-top: 1px; height: 61px; font: 700 39.400px/61px "DejaVu Sans", sans-serif; color: #000; word-spacing: 3.500px; letter-spacing: .1px; white-space: nowrap; }
.search { width: 1420px; height: 52.500px; border: 1.400px solid #ced4da; border-radius: 5px; background: #fff; padding-left: 17px; color: #6c757d; font-size: 22.750px; line-height: 53px; margin-bottom: 15px; }
.card { width: 1596px; height: 138.500px; border: 1.400px solid #ccc; border-radius: 5.500px; background: #fff; display: flex; padding: 7px 0 0 7px; margin-bottom: 15.200px; }
.info { margin-left: 107px; display: flex; flex-direction: column; line-height: 27.300px; }
strong { font-size: 19.350px; color: #000; }
small { font-size: 19.020px; color: #888; }
.acts { display: flex; gap: 13px; margin-top: 14px; }
.acts .dark { width: 103.500px; }
.acts .dark:first-child { width: 130.500px; }
.pager { display: flex; gap: 7.500px; margin: 0 0 0 587.500px; }
.overlay { position: absolute; inset: 0; background: rgba(0, 0, 0, .5); display: flex; align-items: flex-start; padding: 41px 0 0 669.500px; }
.modal { width: 708.500px; height: 334px; background: #fff; border-radius: 6px; box-shadow: 0 0 0 1px rgba(0, 0, 0, .3); font-family: Inter, sans-serif; color: #212529; }
.mhead { display: flex; justify-content: space-between; height: 98px; border-bottom: 1.400px solid #dee2e6; padding: 0 24.500px 0 23px; }
h2 { margin: 0; font-weight: 500; font-size: 32.300px; line-height: 99px; letter-spacing: -.4px; }
.mhead svg { margin-top: 34px; }
ul { list-style: none; margin: 0; padding: 23.500px 0 0 73px; }
li { display: flex; }
li i { width: 18px; height: 18.500px; margin: 6px 10.500px 0 0; border: 1.500px solid #767676; border-radius: 3.500px; background: #fff; }
li p { margin: 0; font-size: 22px; line-height: 34.100px; color: #111; letter-spacing: -.2px; }
.minvite { font-size: 21.800px; line-height: 34px; margin: 10.500px 0 0 258.500px; }

.downloads { flex: 1; display: flex; align-items: center; padding-left: 6px; background: linear-gradient(#fff 0, #fdfdfd 50%, #e2e2e2 100%); color: #3c4043; }
.file { position: relative; width: 331px; height: 81px; display: flex; align-items: center; padding: 0 27.500px 0 26px; font-size: 18.400px; }
.file::after { content: ""; position: absolute; right: 0; top: 10px; height: 62px; border-right: 1px solid #b8b8b8; }
.hot { background: linear-gradient(#e9eaeb 0, #e4e4e5 50%, #cecece 100%); }
.file span { flex: 1; text-align: center; margin: 2px 6px 0 0; }
.all { margin: -2px 0 0 auto; width: 117px; height: 46px; border: 1px solid #dadce0; border-radius: 6px; color: #1a6fe6; font: 600 16.600px/44px Inter, sans-serif; text-align: center; }
.close { margin: -1px 18.500px 0 18.500px; }

.dock { position: absolute; left: 38px; top: 1209px; width: 1972px; height: 64.500px; display: flex; padding-left: 4px; border-radius: 17px; background: #d8d3d4; box-shadow: 0 0 0 1px #bfbcbc, inset 0 1px 0 #e6e2e2; }
.slot { width: 50.500px; height: 64px; display: flex; flex-direction: column; align-items: center; flex: none; }
.slot svg { width: 48px; height: 48px; margin-top: 6px; }
.mini svg { margin-top: 5.500px; }
.slot i { width: 6px; height: 6px; margin-top: 1px; border-radius: 50%; background: #595656; }
.dock hr { margin: 8px 10.500px 0 11px; width: 1px; height: 47px; border: 0; background: #9f9a9b; flex: none; }
</style>
